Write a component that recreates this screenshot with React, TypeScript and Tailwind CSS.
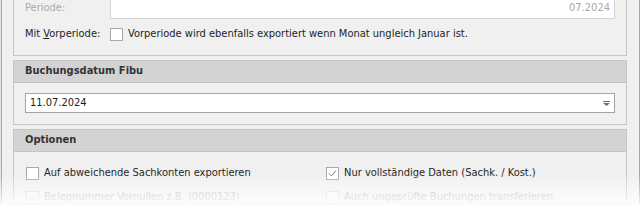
import React from 'react';

const font = "font-['DejaVu_Sans_Condensed','DejaVu_Sans',sans-serif]";

interface CheckProps {
  checked?: boolean;
  disabled?: boolean;
  label: string;
}

const CheckMark: React.FC<{ color: string }> = ({ color }) => (
  <svg width="11" height="11" viewBox="0 0 11 11" className="block">
    <path d="M2 5.5 L4.5 8 L9 2.5" fill="none" stroke={color} strokeWidth="1" />
  </svg>
);

const CheckOption: React.FC<CheckProps> = ({ checked, disabled, label }) => (
  <div className="flex items-center h-[20px]">
    <div
      className={
        disabled
          ? 'w-[13px] h-[13px] border border-[#d6d6d6] bg-[#f6f6f6] flex items-center justify-center'
          : 'w-[13px] h-[13px] border border-[#a8a8a8] bg-white flex items-center justify-center'
      }
    >
      {checked && <CheckMark color={disabled ? '#c8c8c8' : '#7a7a7a'} />}
    </div>
    <span className={disabled ? 'ml-[5px] text-[#b4b4b4]' : 'ml-[5px] text-[#1e1e1e]'}>{label}</span>
  </div>
);

const PanelHeader: React.FC<{ title: string }> = ({ title }) => (
  <div className="h-[22px] bg-[#d3d3d3] border-b border-[#c4c4c4] flex items-center pl-[11px] font-bold text-[#333]">
    {title}
  </div>
);

export default function App() {
  return (
    <div className={`${font} text-[11px] relative w-[640px] h-[205px] overflow-hidden bg-[#e4e4e4]`}>
      <div className="ml-[1px] h-full bg-[#f0f0f0] border-l border-r border-[#a6a6a6] pl-[11px] pr-[12px]">
        {/* Periode panel (top cut off) */}
        <div className="-mt-[2px] border-x border-b border-[#c6c6c6] pb-[11px]">
          <div className="flex items-center h-[21px]">
            <span className="w-[96px] pl-[11px] text-[#aaaaaa]">Periode:</span>
            <div className="flex-1 mr-[11px] h-[21px] border border-[#d4d4d4] bg-white flex items-center justify-end pr-[4px] text-[#a8a8a8]">
              07.2024
            </div>
          </div>
          <div className="flex items-center h-[20px] mt-[5px]">
            <span className="w-[96px] pl-[11px] text-[#1e1e1e]">
              Mit <span className="underline">V</span>orperiode:
            </span>
            <CheckOption label="Vorperiode wird ebenfalls exportiert wenn Monat ungleich Januar ist." />
          </div>
        </div>

        {/* Buchungsdatum Fibu */}
        <div className="mt-[4px] border border-[#c6c6c6]">
          <PanelHeader title="Buchungsdatum Fibu" />
          <div className="px-[11px] pt-[10px] pb-[11px]">
            <div className="h-[20px] border border-[#a4a4a4] bg-white flex items-center pl-[4px] pr-[4px] text-[#1e1e1e]">
              <span className="flex-1">11.07.2024</span>
              <svg width="7" height="5" viewBox="0 0 7 5" className="block">
                <rect x="0" y="0" width="7" height="1" fill="#6e6e6e" />
                <path d="M0 2 L7 2 L3.5 5 Z" fill="#6e6e6e" />
              </svg>
            </div>
          </div>
        </div>

        {/* Optionen */}
        <div className="mt-[4px] border border-[#c6c6c6]">
          <PanelHeader title="Optionen" />
          <div className="grid grid-cols-2 pl-[12px] pt-[11px] gap-y-[4px]">
            <CheckOption label="Auf abweichende Sachkonten exportieren" />
            <CheckOption checked label="Nur vollständige Daten (Sachk. / Kost.)" />
            <CheckOption checked disabled label="Belegnummer Vornullen z.B. (0000123)" />
            <CheckOption disabled label="Auch ungeprüfte Buchungen transferieren" />
          </div>
        </div>
      </div>
      <div className="absolute left-0 right-0 bottom-0 h-[32px] bg-gradient-to-b from-transparent to-white/85 pointer-events-none" />
    </div>
  );
}
